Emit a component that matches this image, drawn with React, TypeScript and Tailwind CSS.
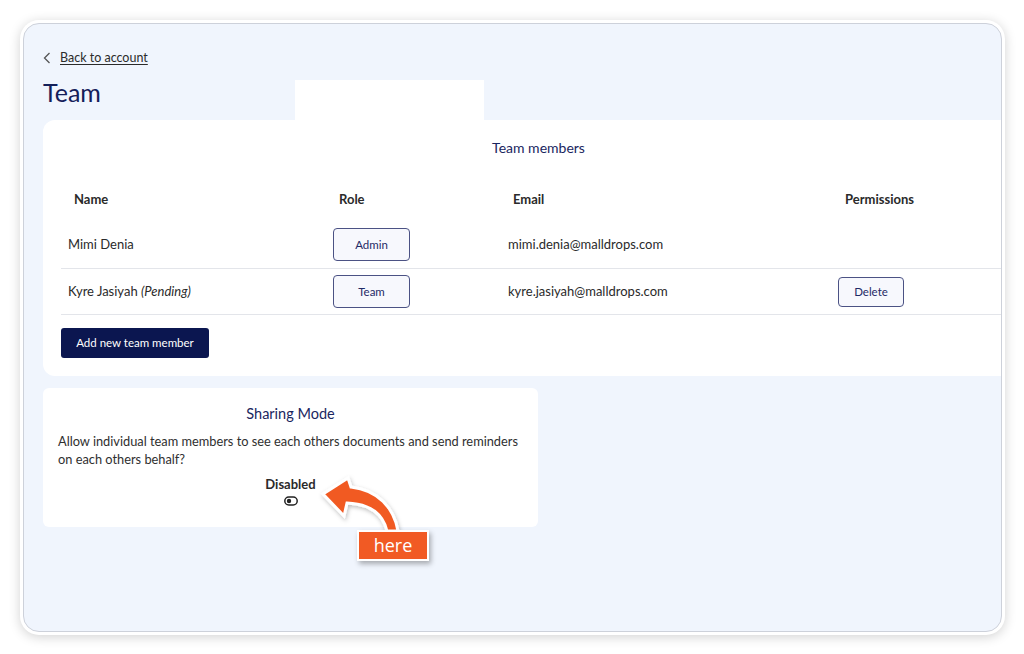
import React from "react";

const font = { fontFamily: "Lato, 'Noto Sans', sans-serif" };

function RoleButton({ label }: { label: string }) {
  return (
    <button className="w-[77px] h-[33px] rounded-[4px] border border-[#4b5284] bg-[#f7f8fd] text-[11.5px] text-[#1f2a66]">
      {label}
    </button>
  );
}

export default function App() {
  return (
    <div className="relative w-[1024px] h-[654px] bg-white pt-[20px] pl-[20px] pr-[19px] pb-[19px]" style={font}>
      <div className="h-full rounded-[19px] bg-white p-[3px] shadow-[0_2px_12px_rgba(0,0,0,0.18)]">
        <div className="relative h-full overflow-hidden rounded-[16px] border border-[#cdd1da] bg-[#f0f5fd]">
          <div className="pl-[19px] pt-[26px]">
            <div className="flex items-center gap-[9px] h-[16px] text-[12.5px] text-[#2b2b2b]">
              <svg width="8" height="12" viewBox="0 0 8 12" fill="none">
                <path d="M6.5 1 L1.5 6 L6.5 11" stroke="#555" strokeWidth="1.3" />
              </svg>
              <span className="underline underline-offset-2">Back to account</span>
            </div>
            <div className="relative mt-[14px] h-[40px]">
              <h1 className="text-[25px] leading-[24px] text-[#14205a]">Team</h1>
              <div className="absolute left-[252px] top-0 w-[189px] h-[40px] bg-white" />
            </div>

            <div className="mr-[-20px] rounded-l-[12px] bg-white pt-[19px] pb-[18px] pl-[18px]">
              <div className="text-center text-[14px] leading-[18px] text-[#1a2660] pr-[5px]">Team members</div>
              <div className="mt-[30px] grid grid-cols-[266px_175px_330px_1fr] text-[13px] text-[#2a2a2a]">
                <div className="pl-[13px] font-bold h-[26px] flex items-center">Name</div>
                <div className="pl-[12px] font-bold h-[26px] flex items-center">Role</div>
                <div className="pl-[11px] font-bold h-[26px] flex items-center">Email</div>
                <div className="pl-[13px] font-bold h-[26px] flex items-center">Permissions</div>

                <div className="pl-[7px] h-[48px] mt-[8px] flex items-center border-b border-[#e3e5ea]">Mimi Denia</div>
                <div className="pl-[6px] h-[48px] mt-[8px] flex items-center border-b border-[#e3e5ea]">
                  <RoleButton label="Admin" />
                </div>
                <div className="pl-[6px] h-[48px] mt-[8px] flex items-center border-b border-[#e3e5ea]">mimi.denia@malldrops.com</div>
                <div className="h-[48px] mt-[8px] border-b border-[#e3e5ea]" />

                <div className="pl-[7px] h-[46px] flex items-center border-b border-[#e3e5ea]">
                  Kyre Jasiyah&nbsp;<i>(Pending)</i>
                </div>
                <div className="pl-[6px] h-[46px] flex items-center border-b border-[#e3e5ea]">
                  <RoleButton label="Team" />
                </div>
                <div className="pl-[6px] h-[46px] flex items-center border-b border-[#e3e5ea]">kyre.jasiyah@malldrops.com</div>
                <div className="pl-[6px] h-[46px] flex items-center border-b border-[#e3e5ea]">
                  <button className="w-[66px] h-[30px] rounded-[4px] border border-[#4b5284] bg-[#f7f8fd] text-[11.5px] text-[#1f2a66]">
                    Delete
                  </button>
                </div>
              </div>
              <button className="mt-[13px] h-[30px] w-[148px] rounded-[3px] bg-[#0b1650] text-[11.5px] text-white">
                Add new team member
              </button>
            </div>

            <div className="mt-[12px] w-[495px] rounded-[6px] bg-white pt-[17px] pb-[21px] px-[15px]">
              <div className="text-center text-[14.5px] leading-[18px] text-[#1a2660]">Sharing Mode</div>
              <p className="mt-[9px] text-[12.8px] leading-[18px] text-[#2f2f2f]">
                Allow individual team members to see each others documents and send reminders on each others behalf?
              </p>
              <div className="mt-[8px] text-center text-[13px] leading-[16px] font-bold text-[#2a2a2a]">Disabled</div>
              <div className="flex justify-center mt-[4px]">
                <svg width="14" height="10" viewBox="0 0 14 10">
                  <rect x="0.8" y="1" width="12.4" height="8" rx="4" fill="none" stroke="#222" strokeWidth="1.5" />
                  <circle cx="5" cy="5" r="2.2" fill="#222" />
                </svg>
              </div>
            </div>
          </div>
        </div>
      </div>

      <svg className="absolute left-0 top-0 pointer-events-none" width="1024" height="654" viewBox="0 0 1024 654">
        <defs>
          <filter id="sh" x="-20%" y="-20%" width="140%" height="140%">
            <feDropShadow dx="1" dy="2" stdDeviation="2" floodColor="#000" floodOpacity="0.25" />
          </filter>
        </defs>
        <path
          d="M323 494 L348 478 L351 487 C378 490 394 508 398 531 L387 531 C383 514 370 504 347 503 L344 516 Z"
          fill="#f15a24"
          stroke="#ffffff"
          strokeWidth="3"
          strokeLinejoin="miter"
          filter="url(#sh)"
        />
      </svg>
      <div
        className="absolute left-[357px] top-[530px] w-[72px] h-[31px] bg-[#f15a24] border-2 border-white shadow-[2px_3px_5px_rgba(0,0,0,0.3)] flex items-center justify-center text-white text-[18px]"
        style={{ fontFamily: "'Open Sans', sans-serif" }}
      >
        here
      </div>
    </div>
  );
}
